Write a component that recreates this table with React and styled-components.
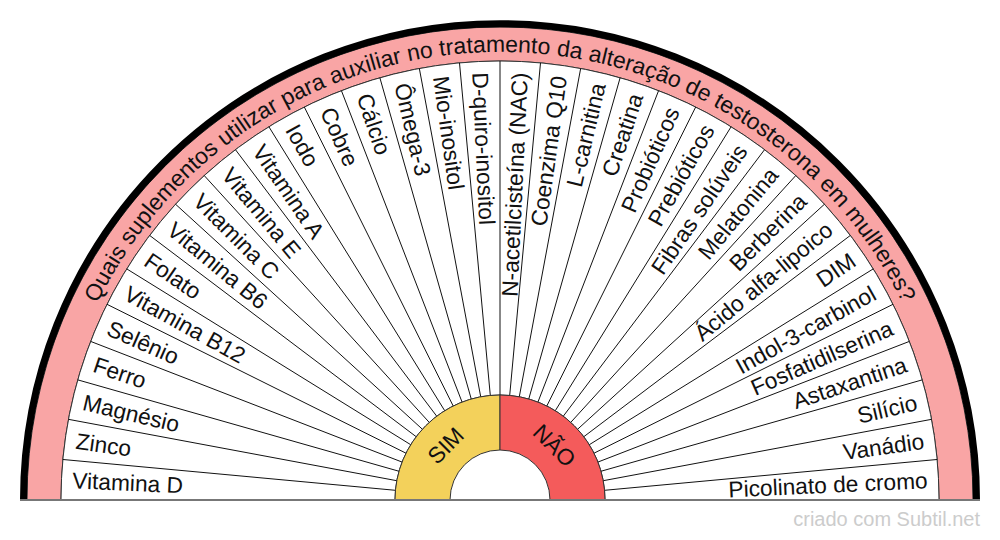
import styled, { createGlobalStyle } from 'styled-components';

const GlobalStyle = createGlobalStyle`
  html, body {
    margin: 0;
    padding: 0;
    background: #ffffff;
  }
  body {
    font-family: "Liberation Sans", Arial, sans-serif;
  }
`;

const Page = styled.div`
  width: 1000px;
  height: 540px;
  display: flex;
  flex-direction: column;
  overflow: hidden;
`;

const ChartSvg = styled.svg`
  display: block;
  width: 1000px;
  height: 508px;
  font-family: "Liberation Sans", Arial, sans-serif;
`;

const Footer = styled.div`
  padding-right: 20px;
  text-align: right;
  font-size: 20px;
  line-height: 23px;
  color: #cccccc;
`;

const Label = styled.text`
  font-size: 22.7px;
  fill: #111111;
  dominant-baseline: central;
`;

const Title = styled.text`
  font-size: 23px;
  fill: #111111;
`;

const CX = 500;
const CY = 500;
const R_OUT = 480;
const R_BAND = 439;
const R_RING = 105;
const R_HOLE = 50;
const R_TEXT = 428;

const sim = [
  'Vitamina D',
  'Zinco',
  'Magnésio',
  'Ferro',
  'Selênio',
  'Vitamina B12',
  'Folato',
  'Vitamina B6',
  'Vitamina C',
  'Vitamina E',
  'Vitamina A',
  'Iodo',
  'Cobre',
  'Cálcio',
  'Ômega-3',
  'Mio-inositol',
  'D-quiro-inositol',
];

const nao = [
  'N-acetilcisteína (NAC)',
  'Coenzima Q10',
  'L-carnitina',
  'Creatina',
  'Probióticos',
  'Prebióticos',
  'Fibras solúveis',
  'Melatonina',
  'Berberina',
  'Ácido alfa-lipoico',
  'DIM',
  'Indol-3-carbinol',
  'Fosfatidilserina',
  'Astaxantina',
  'Silício',
  'Vanádio',
  'Picolinato de cromo',
];

const total = sim.length + nao.length;
const step = 180 / total;

// angle measured from the left horizontal, going over the top
function point(r, deg) {
  const rad = (deg * Math.PI) / 180;
  return [CX - r * Math.cos(rad), CY - r * Math.sin(rad)];
}

function annulus(r1, r2, a1, a2) {
  const [x1, y1] = point(r2, a1);
  const [x2, y2] = point(r2, a2);
  const [x3, y3] = point(r1, a2);
  const [x4, y4] = point(r1, a1);
  const big = a2 - a1 > 180 ? 1 : 0;
  return `M${x1} ${y1} A${r2} ${r2} 0 ${big} 1 ${x2} ${y2} L${x3} ${y3} A${r1} ${r1} 0 ${big} 0 ${x4} ${y4} Z`;
}

function Spokes() {
  const lines = [];
  for (let i = 1; i < total; i++) {
    const [x1, y1] = point(R_RING, i * step);
    const [x2, y2] = point(R_BAND, i * step);
    lines.push(
      <line key={i} x1={x1} y1={y1} x2={x2} y2={y2} stroke="#111" strokeWidth="1" />,
    );
  }
  return <g>{lines}</g>;
}

function Labels() {
  const items = [];
  sim.forEach((name, i) => {
    const a = (i + 0.5) * step;
    const [x, y] = point(R_TEXT, a);
    items.push(
      <Label key={name} x={x} y={y} textAnchor="start" transform={`rotate(${a} ${x} ${y})`}>
        {name}
      </Label>,
    );
  });
  nao.forEach((name, j) => {
    const a = 90 + (j + 0.5) * step;
    const [x, y] = point(R_TEXT, a);
    items.push(
      <Label key={name} x={x} y={y} textAnchor="end" transform={`rotate(${a - 180} ${x} ${y})`}>
        {name}
      </Label>,
    );
  });
  return <g>{items}</g>;
}

function Chart() {
  const titleR = 448;
  const [sx, sy] = point(titleR, 0);
  const [ex, ey] = point(titleR, 180);
  const [simX, simY] = point(77, 45);
  const [naoX, naoY] = point(77, 135);

  return (
    <ChartSvg viewBox="0 0 1000 508">
      <defs>
        <path id="titleArc" d={`M${sx} ${sy} A${titleR} ${titleR} 0 0 1 ${ex} ${ey}`} />
      </defs>

      {/* outer band */}
      <path d={annulus(R_BAND, R_OUT - 7, 0, 180)} fill="#f9a5a5" stroke="#333" strokeWidth="1" />
      <path
        d={`M${CX - R_OUT + 3.5} ${CY} A${R_OUT - 3.5} ${R_OUT - 3.5} 0 0 1 ${CX + R_OUT - 3.5} ${CY}`}
        fill="none"
        stroke="#000"
        strokeWidth="7"
      />
      <Title>
        <textPath href="#titleArc" startOffset="50%" textAnchor="middle">
          Quais suplementos utilizar para auxiliar no tratamento da alteração de testosterona em mulheres?
        </textPath>
      </Title>

      {/* answer sectors */}
      <path d={annulus(R_RING, R_BAND, 0, 180)} fill="#ffffff" stroke="#333" strokeWidth="1" />
      <Spokes />
      <Labels />

      {/* center ring */}
      <path d={annulus(R_HOLE, R_RING, 0, 90)} fill="#f3d15b" stroke="#333" strokeWidth="1" />
      <path d={annulus(R_HOLE, R_RING, 90, 180)} fill="#f45b5b" stroke="#333" strokeWidth="1" />
      <Label x={simX} y={simY} textAnchor="middle" transform={`rotate(-45 ${simX} ${simY})`}>
        SIM
      </Label>
      <Label x={naoX} y={naoY} textAnchor="middle" transform={`rotate(45 ${naoX} ${naoY})`}>
        NÃO
      </Label>

      <line x1={CX - R_OUT} y1={CY} x2={CX + R_OUT} y2={CY} stroke="#777" strokeWidth="2" />
    </ChartSvg>
  );
}

export default function App() {
  return (
    <Page>
      <GlobalStyle />
      <Chart />
      <Footer>criado com Subtil.net</Footer>
    </Page>
  );
}
